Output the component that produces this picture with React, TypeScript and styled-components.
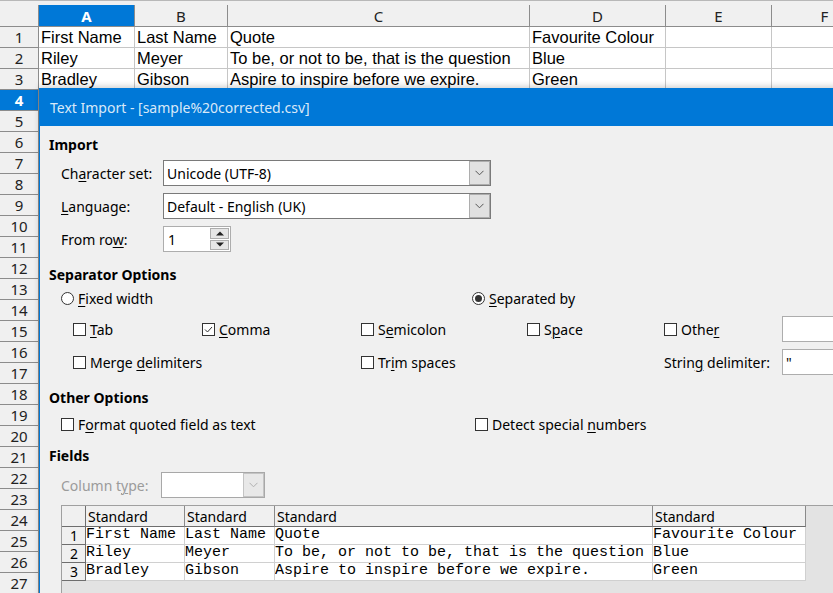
import { ReactNode } from "react";
import styled, { createGlobalStyle } from "styled-components";

const GlobalStyle = createGlobalStyle`
    * { box-sizing: border-box; }
    body { margin: 0; overflow: hidden; background: #ffffff; }
`;

const UI_FONT = `"Noto Sans", "Open Sans", sans-serif`;
const BLUE = "#0078d7";

const COLS = [39, 96, 93, 302, 136, 106, 106];
const LETTERS = ["A", "B", "C", "D", "E", "F"];
const SHEET_ROWS: string[][] = [
    ["First Name", "Last Name", "Quote", "Favourite Colour"],
    ["Riley", "Meyer", "To be, or not to be, that is the question", "Blue"],
    ["Bradley", "Gibson", "Aspire to inspire before we expire.", "Green"],
];

const Page = styled.div`
    position: relative;
    width: 833px;
    height: 593px;
    overflow: hidden;
    background: #f0f0f0;
`;

const Sheet = styled.div`
    display: flex;
    flex-direction: column;
    padding-top: 4px;
    border-top: 1px solid #b8b8b8;
`;

const SheetRow = styled.div<{ $h: number }>`
    display: flex;
    height: ${({ $h }) => $h}px;
    flex-shrink: 0;
`;

const ColHead = styled.div<{ $w: number; $selected?: boolean }>`
    width: ${({ $w }) => $w}px;
    flex-shrink: 0;
    display: flex;
    align-items: center;
    justify-content: center;
    font-family: ${UI_FONT};
    font-size: 15px;
    font-weight: ${({ $selected }) => ($selected ? 700 : 400)};
    color: ${({ $selected }) => ($selected ? "#ffffff" : "#222222")};
    background: ${({ $selected }) => ($selected ? BLUE : "#f0f0f0")};
    border-right: 1px solid #8c8c8c;
    border-bottom: 1px solid #8c8c8c;
`;

const RowHead = styled.div<{ $selected?: boolean }>`
    width: 39px;
    flex-shrink: 0;
    display: flex;
    align-items: center;
    justify-content: center;
    font-family: ${UI_FONT};
    font-size: 15px;
    font-weight: ${({ $selected }) => ($selected ? 700 : 400)};
    color: ${({ $selected }) => ($selected ? "#ffffff" : "#222222")};
    background: ${({ $selected }) => ($selected ? BLUE : "#f0f0f0")};
    border-right: 1px solid #8c8c8c;
    border-bottom: 1px solid #8c8c8c;
`;

const Cell = styled.div<{ $w: number }>`
    width: ${({ $w }) => $w}px;
    flex-shrink: 0;
    padding-left: 2px;
    display: flex;
    align-items: center;
    background: #ffffff;
    font-family: "Liberation Sans", Arial, sans-serif;
    font-size: 16.5px;
    color: #000000;
    white-space: nowrap;
    overflow: hidden;
    border-right: 1px solid #c6c6c6;
    border-bottom: 1px solid #c6c6c6;
`;

/* dialog window floating over the sheet */
const Dialog = styled.div`
    position: absolute;
    left: 39px;
    top: 88px;
    width: 820px;
    height: 520px;
    display: flex;
    flex-direction: column;
    background: #f0f0f0;
    border-left: 1px solid ${BLUE};
    box-shadow: 0 -2px 6px rgba(0, 0, 0, 0.18);
    font-family: ${UI_FONT};
    font-size: 14px;
    color: #000000;
`;

const TitleBar = styled.div`
    height: 38px;
    flex-shrink: 0;
    display: flex;
    align-items: center;
    padding-left: 10px;
    background: ${BLUE};
    color: rgba(255, 255, 255, 0.86);
    font-size: 14px;
`;

const Body = styled.div`
    display: flex;
    flex-direction: column;
    padding-left: 9px;
    flex: 1;
`;

const Heading = styled.div<{ $mt: number }>`
    margin-top: ${({ $mt }) => $mt}px;
    height: 18px;
    line-height: 18px;
    font-weight: 700;
`;

const FieldRow = styled.div<{ $mt: number }>`
    margin-top: ${({ $mt }) => $mt}px;
    height: 26px;
    display: flex;
    align-items: center;
    padding-left: 12px;
`;

const FieldLabel = styled.span<{ $w: number; $disabled?: boolean }>`
    width: ${({ $w }) => $w}px;
    flex-shrink: 0;
    color: ${({ $disabled }) => ($disabled ? "#9b9b9b" : "#000000")};
`;

const U = styled.span`
    text-decoration: underline;
    text-underline-offset: 2px;
    text-decoration-thickness: 1px;
`;

const SelectBox = styled.div<{ $w: number; $disabled?: boolean }>`
    width: ${({ $w }) => $w}px;
    height: 26px;
    display: flex;
    align-items: center;
    background: #ffffff;
    border: 1px solid ${({ $disabled }) => ($disabled ? "#a8a8a8" : "#7a7a7a")};
`;

const SelectText = styled.span`
    flex: 1;
    padding-left: 3px;
    white-space: nowrap;
`;

const DropButton = styled.div<{ $disabled?: boolean }>`
    width: 21px;
    height: 24px;
    display: flex;
    align-items: center;
    justify-content: center;
    background: ${({ $disabled }) => ($disabled ? "#e8e8e8" : "#e1e1e1")};
    border: 1px solid ${({ $disabled }) => ($disabled ? "#c4c4c4" : "#adadad")};
`;

const SpinBox = styled.div`
    width: 68px;
    height: 26px;
    display: flex;
    align-items: center;
    background: #ffffff;
    border: 1px solid #adadad;
`;

const SpinValue = styled.span`
    flex: 1;
    padding-left: 4px;
`;

const SpinButtons = styled.div`
    width: 19px;
    height: 22px;
    margin-right: 1px;
    display: flex;
    flex-direction: column;
    gap: 1px;
`;

const SpinButton = styled.div`
    flex: 1;
    display: flex;
    align-items: center;
    justify-content: center;
    background: #e6e6e6;
    border: 1px solid #adadad;
`;

const OptionRow = styled.div<{ $mt: number }>`
    margin-top: ${({ $mt }) => $mt}px;
    height: 18px;
    display: flex;
    align-items: center;
    padding-left: 12px;
`;

const OptionSlot = styled.div<{ $w: number }>`
    width: ${({ $w }) => $w}px;
    flex-shrink: 0;
    display: flex;
    align-items: center;
`;

const SepGrid = styled.div`
    margin-top: 9px;
    display: grid;
    grid-template-columns: 129px 159px 166px 137px 118px 200px;
    grid-auto-rows: 26px;
    row-gap: 7px;
    padding-left: 24px;
    align-items: center;
`;

const GridSpan = styled.div<{ $span: number }>`
    grid-column: span ${({ $span }) => $span};
    display: flex;
    align-items: center;
`;

const TextField = styled.div`
    height: 26px;
    width: 200px;
    display: flex;
    align-items: center;
    padding-left: 3px;
    background: #ffffff;
    border: 1px solid #adadad;
`;

const Choice = styled.label`
    display: inline-flex;
    align-items: center;
    gap: 4px;
    white-space: nowrap;
`;

const Box = styled.span`
    width: 13px;
    height: 13px;
    flex-shrink: 0;
    display: inline-flex;
    align-items: center;
    justify-content: center;
    background: #ffffff;
    border: 1px solid #333333;
`;

const Circle = styled.span`
    width: 13px;
    height: 13px;
    flex-shrink: 0;
    border-radius: 50%;
    display: inline-flex;
    align-items: center;
    justify-content: center;
    background: #ffffff;
    border: 1px solid #333333;
`;

const Dot = styled.span`
    width: 7px;
    height: 7px;
    border-radius: 50%;
    background: #333333;
`;

const Preview = styled.div`
    margin-top: 7px;
    margin-left: 12px;
    flex: 1;
    background: #e3e3e3;
    border-top: 1px solid #a0a0a0;
    border-left: 1px solid #a0a0a0;
`;

const PreviewGrid = styled.div`
    display: grid;
    grid-template-columns: 24px 99px 90px 378px 153px;
    grid-template-rows: 21px repeat(3, 18px);
    width: max-content;
`;

const PreviewHead = styled.div<{ $corner?: boolean }>`
    background: #f0f0f0;
    padding-left: 2px;
    line-height: 21px;
    white-space: nowrap;
    border-right: 1px solid ${({ $corner }) => ($corner ? "#6e6e6e" : "#8a8a8a")};
    border-bottom: 1px solid #6e6e6e;
`;

const PreviewNum = styled.div`
    background: #f0f0f0;
    display: flex;
    align-items: flex-end;
    justify-content: flex-end;
    padding-right: 7px;
    line-height: 16px;
    font-size: 14px;
    border-right: 1px solid #6e6e6e;
    border-bottom: 1px solid #6e6e6e;
`;

const PreviewCell = styled.div`
    background: #ffffff;
    font-family: "Liberation Mono", "Courier New", monospace;
    font-size: 15px;
    line-height: 16px;
    white-space: nowrap;
    overflow: hidden;
    border-right: 1px solid #d0d0d0;
    border-bottom: 1px solid #d0d0d0;
`;

const Chevron = ({ color = "#555555" }: { color?: string }) => (
    <svg width="9" height="6" viewBox="0 0 9 6">
        <path d="M0.5 0.8 L4.5 4.8 L8.5 0.8" fill="none" stroke={color} strokeWidth="1" />
    </svg>
);

const Triangle = ({ up }: { up: boolean }) => (
    <svg width="8" height="5" viewBox="0 0 8 5">
        <path d={up ? "M0 4.5 L4 0.5 L8 4.5 Z" : "M0 0.5 L4 4.5 L8 0.5 Z"} fill="#222222" />
    </svg>
);

const CheckBox = ({ checked, children }: { checked?: boolean; children: ReactNode }) => (
    <Choice>
        <Box>
            {checked && (
                <svg width="11" height="11" viewBox="0 0 11 11">
                    <path d="M2 5.5 L4.5 8 L9 3" fill="none" stroke="#333333" strokeWidth="1" />
                </svg>
            )}
        </Box>
        <span>{children}</span>
    </Choice>
);

const Radio = ({ checked, children }: { checked?: boolean; children: ReactNode }) => (
    <Choice>
        <Circle>{checked && <Dot />}</Circle>
        <span>{children}</span>
    </Choice>
);

const Select = ({ w, text, disabled }: { w: number; text?: string; disabled?: boolean }) => (
    <SelectBox $w={w} $disabled={disabled}>
        <SelectText>{text}</SelectText>
        <DropButton $disabled={disabled}>
            <Chevron color={disabled ? "#b0b0b0" : "#555555"} />
        </DropButton>
    </SelectBox>
);

export default function App() {
    return (
        <Page>
            <GlobalStyle />
            <Sheet>
                <SheetRow $h={22}>
                    <ColHead $w={COLS[0]} />
                    {LETTERS.map((l, i) => (
                        <ColHead key={l} $w={COLS[i + 1]} $selected={l === "A"}>{l}</ColHead>
                    ))}
                </SheetRow>
                {Array.from({ length: 27 }, (_, r) => (
                    <SheetRow $h={21} key={r}>
                        <RowHead $selected={r === 3}>{r + 1}</RowHead>
                        {LETTERS.map((l, c) => (
                            <Cell key={l} $w={COLS[c + 1]}>{SHEET_ROWS[r]?.[c] ?? ""}</Cell>
                        ))}
                    </SheetRow>
                ))}
            </Sheet>

            <Dialog>
                <TitleBar>Text Import - [sample%20corrected.csv]</TitleBar>
                <Body>
                    <Heading $mt={10}>Import</Heading>
                    <FieldRow $mt={6}>
                        <FieldLabel $w={102}>Ch<U>a</U>racter set:</FieldLabel>
                        <Select w={328} text="Unicode (UTF-8)" />
                    </FieldRow>
                    <FieldRow $mt={7}>
                        <FieldLabel $w={102}><U>L</U>anguage:</FieldLabel>
                        <Select w={328} text="Default - English (UK)" />
                    </FieldRow>
                    <FieldRow $mt={7}>
                        <FieldLabel $w={102}>From ro<U>w</U>:</FieldLabel>
                        <SpinBox>
                            <SpinValue>1</SpinValue>
                            <SpinButtons>
                                <SpinButton><Triangle up /></SpinButton>
                                <SpinButton><Triangle up={false} /></SpinButton>
                            </SpinButtons>
                        </SpinBox>
                    </FieldRow>

                    <Heading $mt={14}>Separator Options</Heading>
                    <OptionRow $mt={5}>
                        <OptionSlot $w={411}>
                            <Radio><U>F</U>ixed width</Radio>
                        </OptionSlot>
                        <Radio checked><U>S</U>eparated by</Radio>
                    </OptionRow>
                    <SepGrid>
                        <CheckBox><U>T</U>ab</CheckBox>
                        <CheckBox checked><U>C</U>omma</CheckBox>
                        <CheckBox>S<U>e</U>micolon</CheckBox>
                        <CheckBox>S<U>p</U>ace</CheckBox>
                        <CheckBox>Othe<U>r</U></CheckBox>
                        <TextField />
                        <GridSpan $span={2}>
                            <CheckBox>Merge <U>d</U>elimiters</CheckBox>
                        </GridSpan>
                        <GridSpan $span={2}>
                            <CheckBox>Tr<U>i</U>m spaces</CheckBox>
                        </GridSpan>
                        <span>Strin<U>g</U> delimiter:</span>
                        <TextField>"</TextField>
                    </SepGrid>

                    <Heading $mt={14}>Other Options</Heading>
                    <OptionRow $mt={8}>
                        <OptionSlot $w={414}>
                            <CheckBox>F<U>o</U>rmat quoted field as text</CheckBox>
                        </OptionSlot>
                        <CheckBox>Detect special <U>n</U>umbers</CheckBox>
                    </OptionRow>

                    <Heading $mt={14}>Fields</Heading>
                    <FieldRow $mt={7}>
                        <FieldLabel $w={100} $disabled>Column t<U>y</U>pe:</FieldLabel>
                        <Select w={104} disabled />
                    </FieldRow>

                    <Preview>
                        <PreviewGrid>
                            <PreviewHead $corner />
                            {SHEET_ROWS[0].map((_, i) => (
                                <PreviewHead key={i}>Standard</PreviewHead>
                            ))}
                            {SHEET_ROWS.map((row, r) => [
                                <PreviewNum key={`n${r}`}>{r + 1}</PreviewNum>,
                                ...row.map((v, c) => <PreviewCell key={`${r}-${c}`}>{v}</PreviewCell>),
                            ])}
                        </PreviewGrid>
                    </Preview>
                </Body>
            </Dialog>
        </Page>
    );
}
